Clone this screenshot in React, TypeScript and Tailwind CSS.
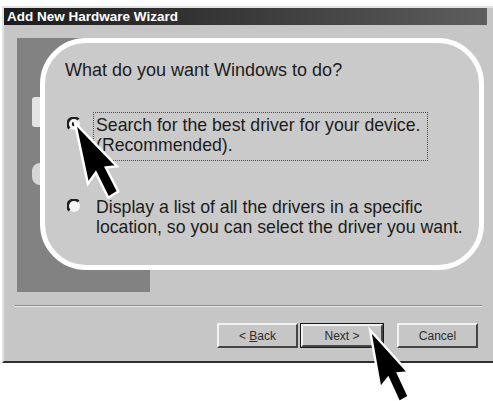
import React from "react";

// classic slim cursor, tip at 0,0, pointing down before rotation
const ARROW = "0,0 0,62 10,53 17,80 28,76 21,50 32,51";

function Radio({ checked }: { checked?: boolean }) {
  return (
    <svg width="14" height="14" viewBox="0 0 14 14" className="shrink-0 mt-[5px] ml-[2px] mr-[12px]">
      <circle cx="7" cy="7" r="6" fill="#f4f4f4" />
      <path d="M 2.5 11.5 A 6.2 6.2 0 0 1 11.5 2.5" stroke="#1f1f1f" strokeWidth="2.6" fill="none" />
      {checked && <circle cx="7" cy="7" r="2.2" fill="#111" />}
    </svg>
  );
}

function Button({ label, isDefault }: { label: React.ReactNode; isDefault?: boolean }) {
  return (
    <div
      className={
        isDefault
          ? "w-[84px] h-[25px] border border-[#1a1a1a] flex"
          : "w-[81px] h-[25px] flex"
      }
    >
      <div className="flex-1 flex items-center justify-center border-t-2 border-l-2 border-t-[#f2f2f2] border-l-[#f2f2f2] border-b-2 border-r-2 border-b-[#454545] border-r-[#454545] text-[12px] text-[#2c2c2c] leading-none">
        {label}
      </div>
    </div>
  );
}

export default function App() {
  return (
    <div className="relative w-[493px] h-[401px] bg-white overflow-hidden font-['Liberation_Sans',Arial,sans-serif]">
      {/* dialog */}
      <div className="mt-[6px] ml-[2px] w-[491px] bg-[#c6c6c6] border-t-2 border-l-2 border-t-[#e2e2e2] border-l-[#e2e2e2] border-b-2 border-b-[#2e2e2e]">
        <div className="mr-[6px] h-[17px] bg-gradient-to-r from-[#1c1c1c] via-[#3a3a3a] to-[#5e5e5e] pl-[3px] text-white font-bold text-[13.5px] leading-[17px] whitespace-nowrap">
          Add New Hardware Wizard
        </div>

        <div className="pb-[13px]">
          <div className="mt-[13px] ml-[13px] w-[133px] h-[254px] bg-[#828282] pl-[15px] pt-[59px]">
            <div className="w-[20px] h-[30px] bg-[#e4e4e4] rounded-[3px]" />
            <div className="mt-[36px] w-[16px] h-[22px] bg-[#d6d6d6] rounded-full" />
          </div>

          <div className="mt-[13px] ml-[11px] mr-[11px]">
            <div className="h-px bg-[#8a8a8a]" />
            <div className="h-px bg-[#ececec]" />
          </div>

          <div className="mt-[16px] pr-[15px] flex justify-end">
            <Button
              label={
                <span>
                  &lt; <u>B</u>ack
                </span>
              }
            />
            <div className="ml-[2px]">
              <Button label="Next >" isDefault />
            </div>
            <div className="ml-[13px]">
              <Button label="Cancel" />
            </div>
          </div>
        </div>
      </div>

      {/* callout over the dialog */}
      <div className="absolute left-[40px] top-[38px] w-[444px] h-[232px] border-[5px] border-white rounded-[46px] bg-[#cacaca] pl-[20px] pt-[16px] text-[#1c1c1c]">
        <div className="text-[18px] leading-[22px] whitespace-nowrap">What do you want Windows to do?</div>

        <div className="mt-[31px] flex items-start">
          <Radio checked />
          <div className="w-[335px] border border-dotted border-[#4a4a4a] pl-[2px] pt-[2px] pb-[5px] text-[17.7px] leading-[20px] whitespace-nowrap">
            Search for the best driver for your device.
            <br />
            (Recommended).
          </div>
        </div>

        <div className="mt-[33px] flex items-start">
          <Radio />
          <div className="border border-transparent pl-[2px] pt-[2px] text-[17.7px] leading-[20px] whitespace-nowrap">
            Display a list of all the drivers in a specific
            <br />
            location, so you can select the driver you want.
          </div>
        </div>
      </div>

      {/* pointer arrows */}
      <svg className="absolute inset-0 pointer-events-none" width="493" height="401">
        <polygon
          points={ARROW}
          transform="translate(75 123) rotate(-12)"
          fill="#000"
          stroke="#fff"
          strokeWidth="2.5"
          strokeLinejoin="miter"
        />
        <polygon
          points={ARROW}
          transform="translate(370 330) rotate(-10) scale(0.95)"
          fill="#000"
          stroke="#fff"
          strokeWidth="2.5"
          strokeLinejoin="miter"
        />
      </svg>
    </div>
  );
}
